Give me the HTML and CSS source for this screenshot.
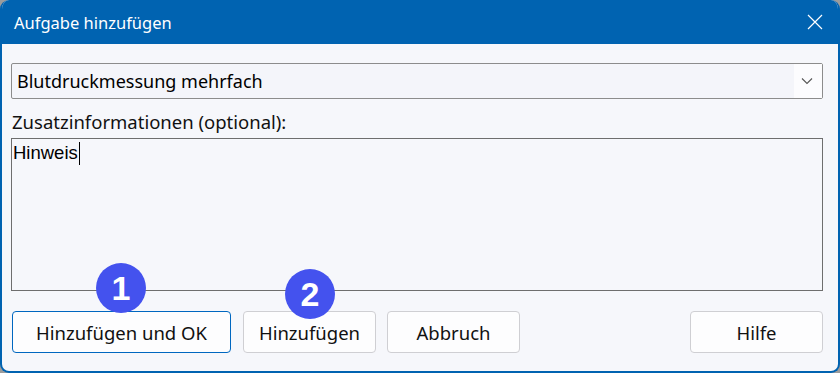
FILE: index.html
```html
<!DOCTYPE html>
<html lang="de">
<head>
    <meta charset="UTF-8">
    <meta name="viewport" content="width=device-width, initial-scale=1.0">
    <title>Aufgabe hinzufügen</title>
    <link rel="stylesheet" href="styles.css">
</head>
<body>
    <div class="window">
        <div class="titlebar">
            <span class="title">Aufgabe hinzufügen</span>
            <svg class="close" width="16" height="16" viewBox="0 0 16 16">
                <path d="M1 1 L15 15 M15 1 L1 15" stroke="#fff" stroke-width="1.2" fill="none"/>
            </svg>
        </div>
        <div class="content">
            <div class="combo">
                <span class="combo-text">Blutdruckmessung mehrfach</span>
                <span class="combo-arrow">
                    <svg width="12" height="8" viewBox="0 0 12 8">
                        <path d="M1 1.5 L6 6.5 L11 1.5" stroke="#555" stroke-width="1.1" fill="none"/>
                    </svg>
                </span>
            </div>
            <div class="label">Zusatzinformationen (optional):</div>
            <div class="memo"><span class="memo-text">Hinweis</span><span class="caret"></span></div>
            <div class="buttons">
                <button class="btn btn-default">Hinzufügen und OK</button>
                <button class="btn btn-add">Hinzufügen</button>
                <button class="btn btn-cancel">Abbruch</button>
                <button class="btn btn-help">Hilfe</button>
            </div>
            <span class="badge badge-1">1</span>
            <span class="badge badge-2">2</span>
        </div>
    </div>
</body>
</html>
```

FILE: styles.css
```css
body {
    margin: 0;
    background-color: #9c9c9c;
    font-family: "Noto Sans", "DejaVu Sans", sans-serif;
}
.window {
    width: 840px;
    height: 373px;
    box-sizing: border-box;
    background-color: #f6f7fb;
    border: 2px solid #0063b1;
    border-top: none;
    border-radius: 9px;
    overflow: hidden;
}
.titlebar {
    height: 44px;
    background-color: #0063b1;
    display: flex;
    align-items: center;
    justify-content: space-between;
    padding: 0 17px 0 14px;
    margin: 0 -2px;
}
.title {
    color: white;
    font-size: 16.5px;
}
.close {
    display: block;
    margin-top: -1px;
}
.content {
    position: relative;
    padding: 19px 15px 0 9px;
}
.combo {
    height: 36px;
    box-sizing: border-box;
    border: 1px solid #8c8c8c;
    border-radius: 2px;
    background-color: #f4f5fa;
    display: flex;
    align-items: stretch;
    justify-content: space-between;
}
.combo-text {
    font-size: 18px;
    color: #000;
    padding-left: 5px;
    line-height: 34px;
}
.combo-arrow {
    width: 26px;
    background-color: #fcfcfe;
    display: flex;
    align-items: center;
    justify-content: center;
    padding-right: 2px;
}
.label {
    font-size: 18.5px;
    color: #111;
    margin-top: 10px;
    line-height: 25px;
    padding-left: 1px;
}
.memo {
    height: 153px;
    margin-top: 4px;
    box-sizing: border-box;
    border: 1px solid #6e6e6e;
    background-color: #f6f7fb;
    padding: 3px 0 0 1px;
    display: flex;
    align-items: flex-start;
}
.memo-text {
    font-family: "Liberation Sans", Arial, sans-serif;
    font-size: 18.5px;
    line-height: 22px;
    color: #000;
}
.caret {
    width: 1px;
    height: 23px;
    background-color: #000;
    margin-left: 1px;
}
.buttons {
    display: flex;
    margin-top: 20px;
    padding-left: 1px;
}
.btn {
    height: 42px;
    box-sizing: border-box;
    border: 1px solid #cfcfd3;
    border-radius: 4px;
    background-color: #fdfdfe;
    font-family: "Noto Sans", "DejaVu Sans", sans-serif;
    font-size: 18.5px;
    color: #111;
    padding: 0;
    margin-right: 11px;
    width: 133px;
}
.btn-default {
    width: 219px;
    border-color: #0067c0;
    margin-right: 12px;
}
.btn-help {
    margin-left: auto;
    margin-right: 0;
}
.badge {
    position: absolute;
    width: 50px;
    height: 50px;
    border-radius: 50%;
    background-color: #4452ee;
    color: white;
    font-family: "Liberation Sans", Arial, sans-serif;
    font-weight: bold;
    font-size: 34px;
    display: flex;
    align-items: center;
    justify-content: center;
}
.badge-1 {
    left: 94px;
    top: 219px;
}
.badge-2 {
    left: 283px;
    top: 225px;
}
```
